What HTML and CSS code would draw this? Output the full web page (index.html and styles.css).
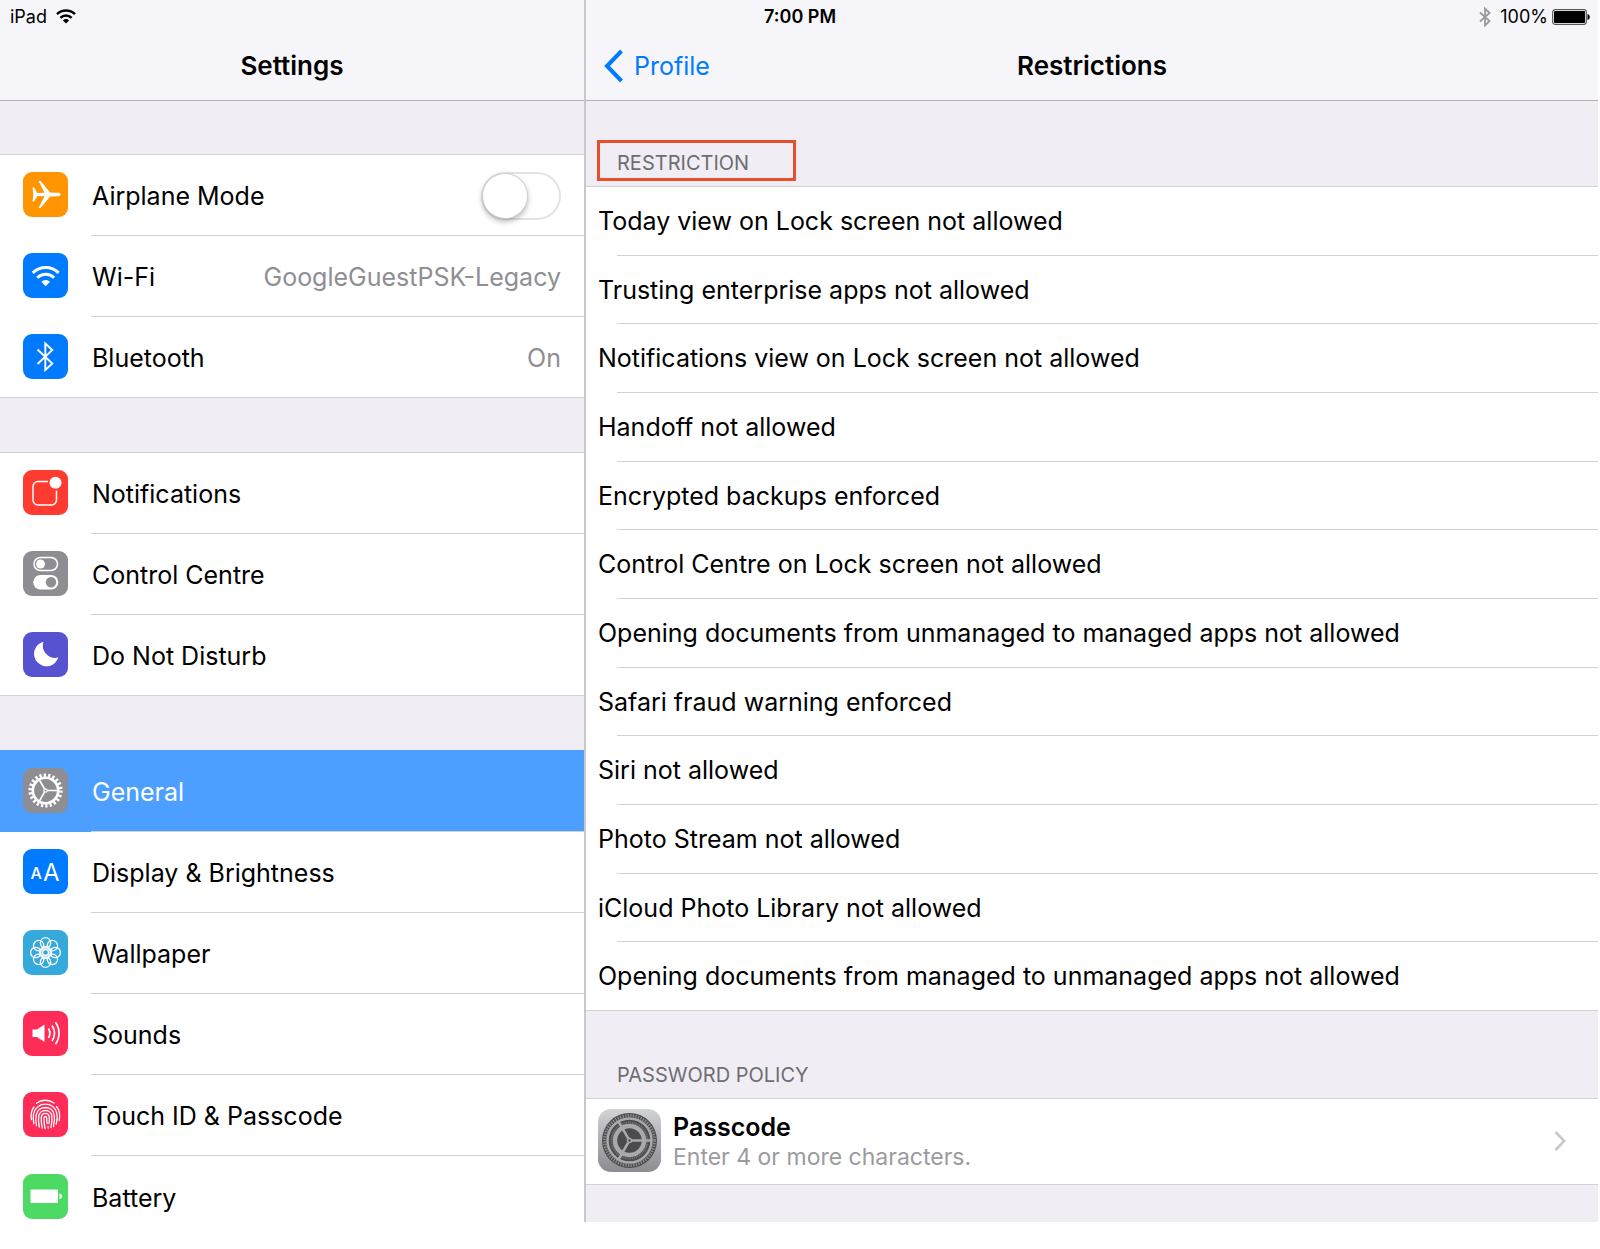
FILE: index.html
```html
<!DOCTYPE html>
<html lang="en-GB">
<head>
<meta charset="utf-8">
<meta name="viewport" content="width=device-width, initial-scale=1">
<title>Settings – Restrictions</title>
<link rel="stylesheet" href="styles.css">
</head>
<body>
<div class="device">
  <div class="status-bar">
    <div class="status-left">
      <span>iPad</span>
      <svg class="status-wifi" viewBox="0 0 20 15" aria-label="Wi-Fi"><path d="M1 5.2a13 13 0 0 1 18 0M4.4 8.8a8 8 0 0 1 11.2 0" fill="none" stroke="#000" stroke-width="2.5"/><path d="M10 14.5 6.9 11.400a4.400 4.400 0 0 1 6.200 0z"/></svg>
    </div>
    <div class="status-time">7:00 PM</div>
    <div class="status-right">
      <svg class="status-bt" viewBox="0 0 12 20" aria-label="Bluetooth"><path d="M1 5.500 10.500 14 6 18.500V1.500L10.500 6 1 14.500" fill="none" stroke="#9a999c" stroke-width="1.800"/></svg>
      <span>100%</span>
      <svg class="status-battery" viewBox="0 0 38 16" aria-label="Battery full"><rect x=".7" y=".7" width="33.600" height="14.600" rx="2.500" fill="#fff" stroke="#555" stroke-width="1.200"/><rect x="2" y="2" width="31" height="12" rx="1"/><path d="M35.500 5c3 .6 3 5.400 0 6z"/></svg>
    </div>
  </div>

  <div class="split">
    <aside class="sidebar">
      <header class="nav-bar"><h1 class="nav-title">Settings</h1></header>
      <nav class="menu">
        <div class="group">
          <div class="row">
            <svg class="icon icon-orange" viewBox="0 0 45 45"><path d="M9.500 15.500h1.600l3.200 5.400 7.200-.2-6-11.700h2.100l9.500 11.600 8.600.2c2.500.2 2.500 3.200 0 3.400l-8.600.2-9.500 11.600h-2.100l6-11.700-7.200-.2-3.200 5.400H9.500l.8-7z" fill="#fff"/></svg>
            <div class="row-body"><label class="row-label" for="airplane">Airplane Mode</label><input class="switch" type="checkbox" role="switch" id="airplane"></div>
          </div>
          <a class="row" href="#wifi">
            <svg class="icon icon-blue" viewBox="0 0 45 45"><g fill="none" stroke="#fff" stroke-width="3"><path d="M9.800 19.800a18.500 18.500 0 0 1 25.800 0M14.300 24.800a12 12 0 0 1 16.800 0"/></g><path d="M22.700 33.200 18.300 28.800a6.200 6.200 0 0 1 8.800 0z" fill="#fff"/></svg>
            <div class="row-body"><span class="row-label">Wi-Fi</span><span class="row-value">GoogleGuestPSK-Legacy</span></div>
          </a>
          <a class="row" href="#bluetooth">
            <svg class="icon icon-blue" viewBox="0 0 45 45"><path d="M14.500 15.500 29.300 29.500 22.300 36V9.500L29.300 16 14.500 30" fill="none" stroke="#fff" stroke-width="1.900"/></svg>
            <div class="row-body"><span class="row-label">Bluetooth</span><span class="row-value">On</span></div>
          </a>
        </div>

        <div class="group">
          <a class="row" href="#notifications">
            <svg class="icon icon-red" viewBox="0 0 45 45"><path d="M25 11.500H15a5 5 0 0 0-5 5V30a5 5 0 0 0 5 5h13.500a5 5 0 0 0 5-5V20.500" fill="none" stroke="#fff" stroke-width="1.500"/><circle cx="32.500" cy="12.700" r="6" fill="#fff"/></svg>
            <div class="row-body"><span class="row-label">Notifications</span></div>
          </a>
          <a class="row" href="#control-centre">
            <svg class="icon icon-grey" viewBox="0 0 45 45"><rect x="11" y="6.500" width="23.500" height="13" rx="6.500" fill="none" stroke="#fff" stroke-width="1.500"/><circle cx="17.500" cy="13" r="4.500" fill="#fff"/><rect x="10.300" y="24" width="25" height="14.500" rx="7.200" fill="#fff"/><circle cx="28" cy="31.300" r="5.200" fill="#8e8d93"/></svg>
            <div class="row-body"><span class="row-label">Control Centre</span></div>
          </a>
          <a class="row" href="#do-not-disturb">
            <svg class="icon icon-purple" viewBox="0 0 45 45"><path d="M20.500 9.800a12.400 12.400 0 1 0 14.800 15.700A12.300 12.300 0 0 1 20.500 9.800z" fill="#fff"/></svg>
            <div class="row-body"><span class="row-label">Do Not Disturb</span></div>
          </a>
        </div>

        <div class="group group-selected">
          <a class="row row-selected" href="#general" aria-current="page">
            <svg class="icon icon-grey" viewBox="0 0 45 45"><g fill="none" stroke="#fff"><circle cx="22.500" cy="22.500" r="12.700" stroke-width="2.600"/><circle cx="22.500" cy="22.500" r="15.200" stroke-width="3.800" stroke-dasharray="2.200 2.141"/><path d="M24.500 22.500H35M21.500 20.800 16.200 11.600M21.500 24.200 16.200 33.400" stroke-width="1.700"/><circle cx="22.500" cy="22.500" r="1.700" stroke-width="1.200"/></g></svg>
            <div class="row-body"><span class="row-label">General</span></div>
          </a>
          <a class="row" href="#display">
            <svg class="icon icon-blue" viewBox="0 0 45 45"><g fill="#fff" font-family="Inter, sans-serif"><text x="7.500" y="29.500" font-size="16" font-weight="500">A</text><text x="20" y="31.500" font-size="24">A</text></g></svg>
            <div class="row-body"><span class="row-label">Display &amp; Brightness</span></div>
          </a>
          <a class="row" href="#wallpaper">
            <svg class="icon icon-sky" viewBox="0 0 45 45"><g fill="none" stroke="#fff" stroke-width="1.300"><circle cx="22.500" cy="12.800" r="5.200"/><circle cx="29.360" cy="15.640" r="5.200"/><circle cx="32.200" cy="22.500" r="5.200"/><circle cx="29.360" cy="29.360" r="5.200"/><circle cx="22.500" cy="32.200" r="5.200"/><circle cx="15.640" cy="29.360" r="5.200"/><circle cx="12.800" cy="22.500" r="5.200"/><circle cx="15.640" cy="15.640" r="5.200"/><circle cx="22.500" cy="22.500" r="3"/><circle cx="22.500" cy="22.500" r="5.800"/></g></svg>
            <div class="row-body"><span class="row-label">Wallpaper</span></div>
          </a>
          <a class="row" href="#sounds">
            <svg class="icon icon-pink" viewBox="0 0 45 45"><path d="M9.500 18.500h4.500l7.500-5v17.500l-7.500-5H9.500z" fill="#fff"/><g fill="none" stroke="#fff" stroke-width="1.700"><path d="M25.500 17.500a9.500 9.500 0 0 1 0 9.500M29 14.500a14 14 0 0 1 0 15.500M32.500 11.300a19 19 0 0 1 0 22"/></g></svg>
            <div class="row-body"><span class="row-label">Sounds</span></div>
          </a>
          <a class="row" href="#touch-id">
            <svg class="icon icon-pink" viewBox="0 0 45 45"><g fill="none" stroke="#fff" stroke-width="1.300" stroke-linecap="round"><path d="M13.500 11.300a14.500 14.500 0 0 1 17.500-.2"/><path d="M8.500 27.500c-1-5-.3-9 2.500-12.500M33.500 14.500c3 3.500 3.800 8.500 2.700 14"/><path d="M10.800 31.500c-.8-4-.8-7-.2-10 2.800-12.500 21-12.500 23.300 0 .6 3.500.2 7-.6 10.500"/><path d="M13.500 33.500c-.8-4-.9-7.500-.3-10.500 1.800-10 16.500-10 18.100 0 .6 4 .1 7.500-.8 11.500"/><path d="M16.300 35c-.8-4-1-7.500-.6-10.500.8-8 12.600-8 13.200 0 .3 4-.1 7.500-1 11"/><path d="M19.200 36c-.8-4-1.100-7.500-.9-10.500.3-5.500 7.700-5.500 8 0 .1 2.500 0 4-.3 6"/><path d="M22 36.500c-.8-5-1.100-8-1-10.500.1-2 2.600-2 2.700 0 .1 2.500.2 4 .4 5.500M25 34.500l.2 1.500"/></g></svg>
            <div class="row-body"><span class="row-label">Touch ID &amp; Passcode</span></div>
          </a>
          <a class="row row-cut" href="#battery">
            <svg class="icon icon-green" viewBox="0 0 45 45"><rect x="7.500" y="15.500" width="27.500" height="13.500" rx="1" fill="#fff"/><path d="M36.500 19.500c3.300.5 3.300 5 0 5.500z" fill="#fff"/></svg>
            <div class="row-body"><span class="row-label">Battery</span></div>
          </a>
        </div>
      </nav>
    </aside>

    <main class="detail">
      <header class="nav-bar nav-bar-detail">
        <a class="back" href="#profile">
          <svg class="back-chevron" viewBox="0 0 20 34"><path d="M17.500 2 3 17l14.500 15" fill="none" stroke="currentColor" stroke-width="4"/></svg>
          <span>Profile</span>
        </a>
        <h1 class="nav-title">Restrictions</h1>
      </header>

      <section>
        <div class="section-head"><h2 class="section-title section-title-marked">RESTRICTION</h2></div>
        <ul class="restrictions">
          <li><span>Today view on Lock screen not allowed</span></li>
          <li><span>Trusting enterprise apps not allowed</span></li>
          <li><span>Notifications view on Lock screen not allowed</span></li>
          <li><span>Handoff not allowed</span></li>
          <li><span>Encrypted backups enforced</span></li>
          <li><span>Control Centre on Lock screen not allowed</span></li>
          <li><span>Opening documents from unmanaged to managed apps not allowed</span></li>
          <li><span>Safari fraud warning enforced</span></li>
          <li><span>Siri not allowed</span></li>
          <li><span>Photo Stream not allowed</span></li>
          <li><span>iCloud Photo Library not allowed</span></li>
          <li><span>Opening documents from managed to unmanaged apps not allowed</span></li>
        </ul>
      </section>

      <section>
        <div class="section-head section-head-next"><h2 class="section-title">PASSWORD POLICY</h2></div>
        <a class="policy" href="#passcode">
          <svg class="policy-icon" viewBox="0 0 63 63">
            <defs><linearGradient id="plate" x1="0" y1="0" x2="0" y2="1"><stop offset="0" stop-color="#d2d3d5"/><stop offset="1" stop-color="#8b8b90"/></linearGradient></defs>
            <rect width="63" height="63" rx="13" fill="url(#plate)"/>
            <circle cx="31.500" cy="31.500" r="27.500" fill="#4b4b4e"/>
            <g fill="none" stroke="#a9a9ac">
              <circle cx="31.500" cy="31.500" r="25" stroke="#8d8d90" stroke-width="3" stroke-dasharray="1.300 1.318"/>
              <circle cx="31.500" cy="31.500" r="22" stroke-width="2.500"/>
              <circle cx="31.500" cy="31.500" r="18" stroke="#77777a" stroke-width="2" stroke-dasharray="1 .885"/>
              <circle cx="31.500" cy="31.500" r="14.500" stroke-width="4.500"/>
              <path d="M34 31.500H53M30.200 29.300 20.700 12.900M30.200 33.700 20.700 50.100" stroke-width="2.600"/>
              <circle cx="31.500" cy="31.500" r="2" stroke-width="1.500"/>
            </g>
          </svg>
          <span class="policy-text"><strong>Passcode</strong><span>Enter 4 or more characters.</span></span>
          <svg class="disclosure" viewBox="0 0 12 20"><path d="M1.500 1 10.300 10 1.500 19" fill="none" stroke="#c7c7cc" stroke-width="2.600"/></svg>
        </a>
      </section>
    </main>
  </div>
</div>
</body>
</html>
```
FILE: styles.css
```css
:root {
  --canvas: #f0eef4;
  --bar: #f6f5f9;
  --line: #d2d1d6;
  --bar-line: #b4b3b8;
  --grey-text: #8e8e93;
  --blue: #007aff;
}

* { box-sizing: border-box; }

body {
  margin: 0;
  padding-right: 2px;
  background: #fff;
  color: #000;
  font: 25px/32px Inter, "Liberation Sans", sans-serif;
}

h1, h2, ul { margin: 0; padding: 0; font-weight: 400; }
a { color: inherit; text-decoration: none; }
svg { display: block; flex: none; }

.device { display: grid; }
.status-bar, .split { grid-area: 1 / 1; }

.status-bar {
  z-index: 1;
  align-self: start;
  display: grid;
  grid-template-columns: 1fr auto 1fr;
  align-items: center;
  height: 33px;
  padding: 0 8px 0 10px;
  font-size: 18px;
  line-height: 24px;
}
.status-left, .status-right { display: flex; align-items: center; }
.status-left { gap: 9px; }
.status-right { justify-content: flex-end; gap: 4px; }
.status-time { font-weight: 600; }
.status-wifi { width: 20px; height: 15px; }
.status-bt { width: 12px; height: 20px; margin-right: 5px; }
.status-battery { width: 38px; height: 16px; }

.split {
  display: grid;
  grid-template-columns: 586px minmax(0, 1fr);
}

.sidebar { border-right: 2px solid #c8c7cc; }
.sidebar, .detail { background: var(--canvas); }

.nav-bar {
  height: 101px;
  padding: 32px 18px 0;
  display: grid;
  align-items: center;
  background: var(--bar);
  border-bottom: 1px solid var(--bar-line);
}
.nav-bar-detail { grid-template-columns: 1fr auto 1fr; }
.nav-title { font-size: 26px; font-weight: 600; text-align: center; }
.back { display: flex; align-items: center; gap: 10px; color: var(--blue); }
.back-chevron { width: 20px; height: 34px; }

/* Sidebar menu */
.menu {
  display: flex;
  flex-direction: column;
  gap: 54px;
  padding-top: 53px;
}
.group { border-top: 1px solid var(--line); }
.row {
  display: flex;
  align-items: center;
  gap: 23px;
  height: 81px;
  padding-left: 23px;
  background: #fff;
}
.row-body {
  flex: 1;
  align-self: stretch;
  display: flex;
  align-items: center;
  justify-content: space-between;
  padding: 1px 23px 0 1px;
  border-bottom: 1px solid var(--line);
}
.row:last-child { border-bottom: 1px solid var(--line); }
.row:last-child .row-body { border-bottom: 0; }
.row-value { color: var(--grey-text); }
.group-selected { border-top-color: #4c9fff; }
.row-selected { background: #4c9fff; color: #fff; }
.row.row-cut { height: 66px; padding-top: 18px; border-bottom: 0; align-items: flex-start; }
.row-cut .row-body { align-self: auto; height: 47px; }

.icon { width: 45px; height: 45px; margin-bottom: 2px; border-radius: 9px; }
.icon-orange { background: #ff9500; }
.icon-blue { background: #007aff; }
.icon-red { background: #ff3a30; }
.icon-grey { background: #8e8d93; }
.icon-purple { background: #5753d0; }
.icon-sky { background: #35a8dc; }
.icon-pink { background: #ff2c58; }
.icon-green { background: #4cd964; }

.switch {
  appearance: none;
  width: 80px;
  height: 48px;
  margin: 0;
  border: 2px solid #e4e4e6;
  border-radius: 24px;
  background: #fff;
}
.switch::before {
  content: "";
  display: block;
  width: 44px;
  height: 44px;
  border-radius: 50%;
  background: #fff;
  box-shadow: 0 0 1px 1px #d0d0d2, 0 3px 6px rgba(0, 0, 0, .35);
}
.switch:checked { background: #4cd964; border-color: #4cd964; }
.switch:checked::before { margin-left: auto; }

/* Detail pane */
.section-head {
  display: flex;
  align-items: flex-end;
  height: 85px;
  padding: 0 11px 5px;
}
.section-head-next { height: 87px; }
.section-title {
  min-width: 199px;
  padding: 8px 17px 3px;
  border: 3px solid transparent;
  color: #6d6d72;
  font-size: 20px;
  line-height: 24px;
}
.section-title-marked { border-color: #e8502c; }

.restrictions {
  display: flex;
  flex-direction: column;
  min-height: 825px;
  list-style: none;
  background: #fff;
  border-top: 1px solid var(--line);
}
.restrictions li {
  flex: 1;
  display: flex;
  flex-direction: column;
}
.restrictions span {
  flex: 1;
  display: flex;
  align-items: center;
  padding: 0 12px;
}
.restrictions li::after {
  content: "";
  height: 1px;
  margin-left: 31px;
  background: var(--line);
}
.restrictions li:last-child::after { margin-left: 0; }

.policy {
  display: flex;
  align-items: center;
  gap: 12px;
  height: 87px;
  margin-bottom: 37px;
  padding: 0 32px 2px 12px;
  background: #fff;
  border: solid var(--line);
  border-width: 1px 0;
}
.policy-icon { width: 63px; height: 63px; }
.policy-text { flex: 1; display: grid; }
.policy-text strong { font-weight: 600; }
.policy-text span { color: #9b9b9f; font-size: 23px; line-height: 28px; }
.disclosure { width: 12px; height: 20px; }
```
